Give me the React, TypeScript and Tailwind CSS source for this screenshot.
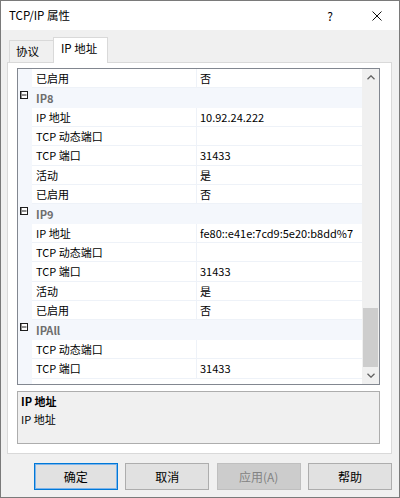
import React from "react";

type Row = { cat?: boolean; name: string; value?: string };

const rows: Row[] = [
    { name: "已启用", value: "否" },
    { cat: true, name: "IP8" },
    { name: "IP 地址", value: "10.92.24.222" },
    { name: "TCP 动态端口", value: "" },
    { name: "TCP 端口", value: "31433" },
    { name: "活动", value: "是" },
    { name: "已启用", value: "否" },
    { cat: true, name: "IP9" },
    { name: "IP 地址", value: "fe80::e41e:7cd9:5e20:b8dd%7" },
    { name: "TCP 动态端口", value: "" },
    { name: "TCP 端口", value: "31433" },
    { name: "活动", value: "是" },
    { name: "已启用", value: "否" },
    { cat: true, name: "IPAll" },
    { name: "TCP 动态端口", value: "" },
    { name: "TCP 端口", value: "31433" },
];

const MinusBox = () => (
    <svg width="8" height="8" viewBox="0 0 8 8" className="block">
        <rect x="0.5" y="0.5" width="7" height="7" fill="white" stroke="#1e1e1e" strokeWidth="1" />
        <rect x="0.5" y="0.5" width="1" height="7" fill="#1e1e1e" />
        <line x1="2" y1="4" x2="6.5" y2="4" stroke="#1e1e1e" strokeWidth="1" />
    </svg>
);

const Chevron = ({ down }: { down?: boolean }) => (
    <svg width="8" height="5" viewBox="0 0 8 5" className="block">
        <path
            d={down ? "M0.5 0.8 L4 4.2 L7.5 0.8" : "M0.5 4.2 L4 0.8 L7.5 4.2"}
            fill="none"
            stroke="#606060"
            strokeWidth="1.3"
        />
    </svg>
);

const PropRow = ({ row }: { row: Row }) => {
    if (row.cat) {
        return (
            <div className="flex h-[19.35px] bg-[#f4f7fc]">
                <div className="w-[14px] shrink-0 pl-[2px] pt-[3px]">
                    <MinusBox />
                </div>
                <div className="flex-1 pl-[4px] flex items-center font-bold text-[#6d6d6d]">{row.name}</div>
            </div>
        );
    }
    return (
        <div className="flex h-[19.35px]">
            <div className="w-[14px] shrink-0 bg-[#f4f7fc]" />
            <div className="w-[164px] shrink-0 pl-[4px] flex items-center border-b border-[#eef2f8] whitespace-nowrap overflow-hidden">
                {row.name}
            </div>
            <div className="flex-1 min-w-0 pl-[3px] flex items-center border-b border-l border-[#eef2f8] whitespace-nowrap overflow-hidden">
                {row.value}
            </div>
        </div>
    );
};

export default function App() {
    return (
        <div className="w-[400px] h-[498px] flex flex-col bg-[#f0f0f0] border border-[#7a7a7a] text-black text-[11px] font-['Noto_Sans_CJK_SC',sans-serif] overflow-hidden">
            {/* Title bar */}
            <div className="h-[29px] shrink-0 bg-white flex items-center pl-[8px] pr-[17px]">
                <span className="text-[11.5px]">TCP/IP 属性</span>
                <span className="ml-auto text-[12px] mr-[39px]">?</span>
                <svg width="10" height="10" viewBox="0 0 10 10" className="block">
                    <path d="M0.5 0.5 L9.5 9.5 M9.5 0.5 L0.5 9.5" stroke="#111" strokeWidth="1" />
                </svg>
            </div>

            <div className="flex-1 flex flex-col pl-[6px] pr-[7px]">
                {/* Tabs */}
                <div className="h-[32px] shrink-0 flex items-end pl-[2px]">
                    <div className="w-[45px] h-[22px] border border-b-0 border-[#d9d9d9] bg-[#f0f0f0] flex items-center pl-[6px] text-[11.5px]">
                        协议
                    </div>
                    <div className="relative z-10 -ml-px -mb-px w-[55px] h-[26px] border border-b-0 border-[#d9d9d9] bg-white flex items-center pl-[7px] pb-[3px] text-[11.5px]">
                        IP 地址
                    </div>
                </div>

                {/* Panel */}
                <div className="h-[392px] shrink-0 bg-white border border-[#d9d9d9] pt-[5px] pl-[9px]">
                    {/* Property grid */}
                    <div className="w-[363px] h-[317px] border border-[#828790] flex overflow-hidden">
                        <div className="flex-1 min-w-0 flex flex-col bg-white">
                            {rows.map((r, i) => (
                                <PropRow key={i} row={r} />
                            ))}
                            <div className="flex-1 flex">
                                <div className="w-[14px] bg-[#f4f7fc]" />
                            </div>
                        </div>
                        <div className="w-[17px] shrink-0 bg-[#f0f0f0] flex flex-col">
                            <div className="h-[17px] flex items-center justify-center">
                                <Chevron />
                            </div>
                            <div className="flex-1" />
                            <div className="h-[59px] mx-[1px] bg-[#cdcdcd]" />
                            <div className="h-[17px] flex items-center justify-center">
                                <Chevron down />
                            </div>
                        </div>
                    </div>

                    {/* Description */}
                    <div className="mt-[6px] w-[363px] h-[53px] border border-[#adadad] bg-[#f0f0f0] pl-[3px]">
                        <div className="leading-[18px] font-bold">IP 地址</div>
                        <div className="leading-[18px]">IP 地址</div>
                    </div>
                </div>

                {/* Buttons */}
                <div className="mt-[9px] flex gap-[7.67px] pl-[27px] text-[12px]">
                    <button className="w-[84px] h-[27px] bg-[#e1e1e1] border border-[#0078d7] shadow-[inset_0_0_0_1px_#7eb4ea]">
                        确定
                    </button>
                    <button className="w-[84px] h-[27px] bg-[#e1e1e1] border border-[#adadad]">取消</button>
                    <button className="w-[84px] h-[27px] bg-[#cccccc] border border-[#bfbfbf] text-[#838383]">
                        应用(A)
                    </button>
                    <button className="w-[84px] h-[27px] bg-[#e1e1e1] border border-[#adadad]">帮助</button>
                </div>
            </div>
        </div>
    );
}
